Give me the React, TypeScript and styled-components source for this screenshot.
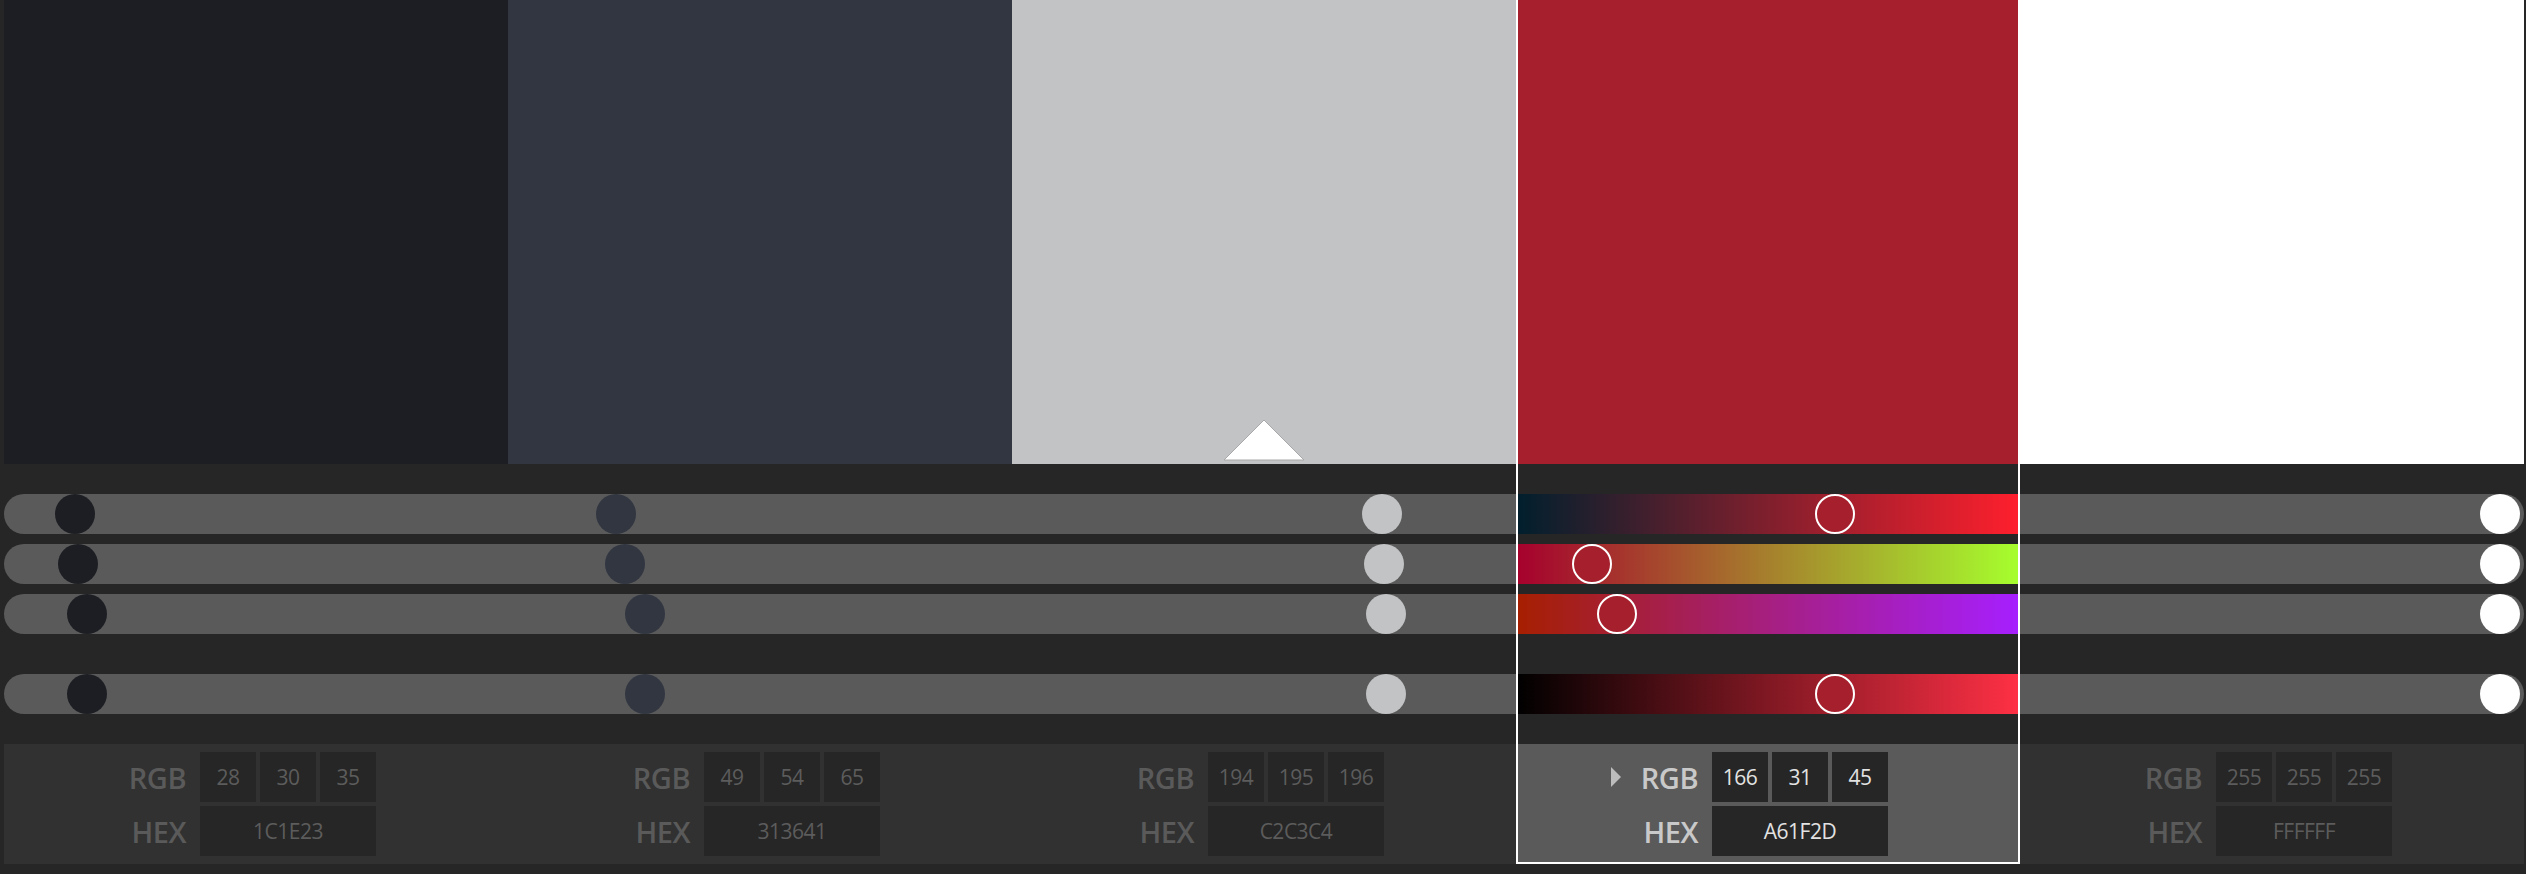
import React from "react";
import styled, { createGlobalStyle, css } from "styled-components";

type Rgb = { r: number; g: number; b: number };

const colors: Rgb[] = [
  { r: 28, g: 30, b: 35 },
  { r: 49, g: 54, b: 65 },
  { r: 194, g: 195, b: 196 },
  { r: 166, g: 31, b: 45 },
  { r: 255, g: 255, b: 255 },
];

const SELECTED = 3;
const MARKED = 2;

const rgb = (c: Rgb) => `rgb(${c.r}, ${c.g}, ${c.b})`;
const hex = (c: Rgb) =>
  [c.r, c.g, c.b].map((v) => v.toString(16).padStart(2, "0")).join("").toUpperCase();

// knob left edge inside a 504px column
const knobLeft = (v: number) => (v / 255) * 460;

const GlobalStyle = createGlobalStyle`
  html, body {
    margin: 0;
    background: #262626;
  }
  body {
    padding: 0 2px 10px 4px;
    min-height: 100vh;
    box-sizing: border-box;
    font-family: "Open Sans", "Noto Sans", sans-serif;
  }
`;

const Strip = styled.div`
  display: flex;
  width: 2520px;
`;

const Column = styled.div<{ $selected: boolean }>`
  position: relative;
  width: 504px;
  display: flex;
  flex-direction: column;

  ${(p) =>
    p.$selected &&
    css`
      &::after {
        content: "";
        position: absolute;
        inset: 0;
        border: 2px solid #ffffff;
        border-top: none;
        pointer-events: none;
      }
    `}
`;

const Swatch = styled.div<{ $color: string }>`
  position: relative;
  height: 464px;
  background: ${(p) => p.$color};
`;

const Marker = styled.svg`
  position: absolute;
  left: 50%;
  bottom: 3px;
  transform: translateX(-50%);
`;

const Sliders = styled.div`
  display: flex;
  flex-direction: column;
  gap: 10px;
  padding-top: 30px;
`;

const Track = styled.div<{ $bg: string; $first: boolean; $last: boolean; $spaced?: boolean }>`
  position: relative;
  height: 40px;
  background: ${(p) => p.$bg};
  border-radius: ${(p) => (p.$first ? "20px 0 0 20px" : p.$last ? "0 20px 20px 0" : "0")};
  margin-top: ${(p) => (p.$spaced ? "30px" : "0")};
`;

const Knob = styled.div<{ $color: string; $ring: boolean }>`
  position: absolute;
  top: 0;
  width: 40px;
  height: 40px;
  box-sizing: border-box;
  border-radius: 50%;
  background: ${(p) => p.$color};
  border: ${(p) => (p.$ring ? "2px solid #ffffff" : "none")};
`;

const Panel = styled.div<{ $selected: boolean }>`
  margin-top: 30px;
  height: 120px;
  box-sizing: border-box;
  padding: 8px 0;
  display: grid;
  grid-template-columns: 182px 176px;
  grid-template-rows: 50px 50px;
  column-gap: 14px;
  row-gap: 4px;
  background: ${(p) => (p.$selected ? "#5a5a5a" : "#313131")};
`;

const Label = styled.div<{ $selected: boolean }>`
  display: flex;
  align-items: center;
  justify-content: flex-end;
  font-size: 29px;
  font-weight: 600;
  letter-spacing: -0.5px;
  color: ${(p) => (p.$selected ? "#c9c9c9" : "#5a5a5a")};
`;

const Caret = styled.span`
  width: 0;
  height: 0;
  border-top: 10px solid transparent;
  border-bottom: 10px solid transparent;
  border-left: 10px solid #bdbdbd;
  margin-right: 20px;
`;

const Boxes = styled.div`
  display: flex;
  gap: 4px;
`;

const Value = styled.div<{ $selected: boolean; $wide?: boolean }>`
  width: ${(p) => (p.$wide ? "176px" : "56px")};
  height: 50px;
  display: flex;
  align-items: center;
  justify-content: center;
  background: #262626;
  font-size: 21px;
  letter-spacing: -0.5px;
  color: ${(p) => (p.$selected ? "#e2e2e2" : "#5c5c5c")};
`;

const Triangle = () => (
  <Marker width="82" height="42" viewBox="0 0 82 42">
    <polygon points="1,41 41,1 81,41" fill="#ffffff" stroke="#a9a9a9" strokeWidth="1" />
  </Marker>
);

const ColorColumn = ({ c, index }: { c: Rgb; index: number }) => {
  const selected = index === SELECTED;
  const first = index === 0;
  const last = index === colors.length - 1;
  const max = Math.max(c.r, c.g, c.b);
  const k = max ? 255 / max : 0;
  const bright = { r: Math.round(c.r * k), g: Math.round(c.g * k), b: Math.round(c.b * k) };

  const rows = [
    { v: c.r, from: rgb({ ...c, r: 0 }), to: rgb({ ...c, r: 255 }) },
    { v: c.g, from: rgb({ ...c, g: 0 }), to: rgb({ ...c, g: 255 }) },
    { v: c.b, from: rgb({ ...c, b: 0 }), to: rgb({ ...c, b: 255 }) },
    { v: max, from: "#000000", to: rgb(bright) },
  ];

  return (
    <Column $selected={selected}>
      <Swatch $color={rgb(c)}>{index === MARKED && <Triangle />}</Swatch>
      <Sliders>
        {rows.map((row, i) => (
          <Track
            key={i}
            $spaced={i === 3}
            $first={first && !selected}
            $last={last && !selected}
            $bg={selected ? `linear-gradient(90deg, ${row.from}, ${row.to})` : "#5a5a5a"}
          >
            <Knob $color={rgb(c)} $ring={selected} style={{ left: knobLeft(row.v) }} />
          </Track>
        ))}
      </Sliders>
      <Panel $selected={selected}>
        <Label $selected={selected}>
          {selected && <Caret />}
          RGB
        </Label>
        <Boxes>
          <Value $selected={selected}>{c.r}</Value>
          <Value $selected={selected}>{c.g}</Value>
          <Value $selected={selected}>{c.b}</Value>
        </Boxes>
        <Label $selected={selected}>HEX</Label>
        <Value $selected={selected} $wide>
          {hex(c)}
        </Value>
      </Panel>
    </Column>
  );
};

export default function App() {
  return (
    <>
      <GlobalStyle />
      <Strip>
        {colors.map((c, i) => (
          <ColorColumn key={i} c={c} index={i} />
        ))}
      </Strip>
    </>
  );
}
